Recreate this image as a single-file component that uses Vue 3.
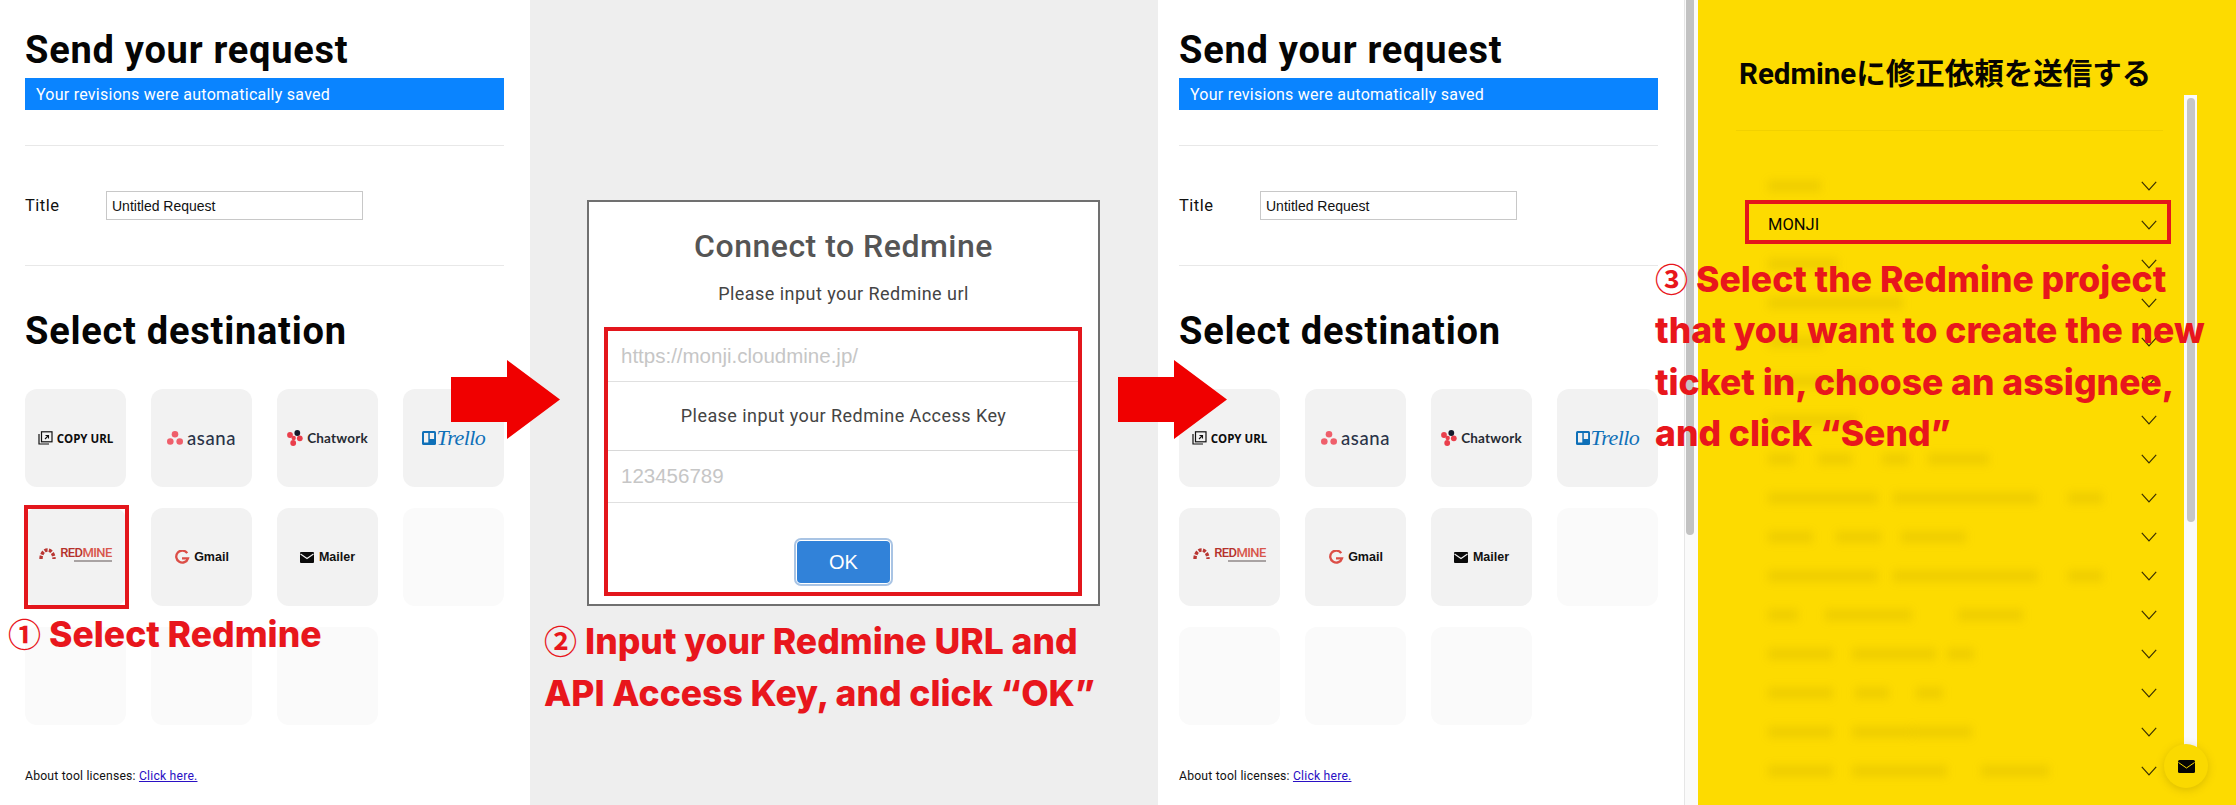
<script setup>
const panels = ['form-a', 'modal', 'form-b', 'yellow']
const tiles = [
  { id: 'copy' }, { id: 'asana' }, { id: 'chatwork' }, { id: 'trello' },
  { id: 'redmine' }, { id: 'gmail' }, { id: 'mailer' }, { id: 'empty' },
  { id: 'empty' }, { id: 'empty' }, { id: 'empty' }
]
const rows = [
  { segs: [[0, 53]] },
  { label: 'MONJI', segs: [] },
  { segs: [[0, 70]] },
  { segs: [[0, 135]] },
  { segs: [[0, 55]] },
  { segs: [[0, 100]] },
  { segs: [[0, 90]] },
  { segs: [[0, 27], [50, 34], [114, 27], [160, 61]] },
  { segs: [[0, 110], [125, 145], [300, 35]] },
  { segs: [[0, 45], [68, 45], [133, 65]] },
  { segs: [[0, 110], [125, 145], [300, 35]] },
  { segs: [[0, 30], [57, 87], [190, 65]] },
  { segs: [[0, 65], [84, 84], [179, 27]] },
  { segs: [[0, 65], [87, 34], [148, 27]] },
  { segs: [[0, 65], [84, 60], [144, 60]] },
  { segs: [[0, 65], [84, 95], [213, 68]] }
]
</script>

<template>
  <div class="shot">
    <template v-for="p in panels" :key="p">
      <section v-if="p.startsWith('form')" class="form" :class="p">
        <div class="form-body">
          <h1 class="h-first">Send your request</h1>
          <div class="saved">Your revisions were automatically saved</div>
          <hr class="rule rule-one" />
          <div class="title-row">
            <span class="title-label">Title</span>
            <input class="title-input" value="Untitled Request" />
          </div>
          <hr class="rule rule-two" />
          <h1 class="h-second">Select destination</h1>
          <div class="tiles">
            <div v-for="(t, i) in tiles" :key="i" class="tile" :class="{ faded: t.id === 'empty' }">
              <div v-if="t.id === 'copy'" class="logo">
                <svg width="15" height="14" viewBox="0 0 15 14" fill="none" stroke="#111" stroke-width="1.2">
                  <path d="M1 3v10h10" /><rect x="3.5" y="0.8" width="10.5" height="10" />
                  <path d="M7 8l3.500-3.500M7.500 4.500h3v3" stroke-width="1.100" />
                </svg>
                <span class="t-copy">COPY URL</span>
              </div>
              <div v-else-if="t.id === 'asana'" class="logo">
                <svg width="16" height="14" viewBox="0 0 16 14" fill="#ef5f6b">
                  <circle cx="8" cy="3.300" r="3.300" /><circle cx="3.300" cy="10.500" r="3.300" /><circle cx="12.700" cy="10.500" r="3.300" />
                </svg>
                <span class="t-asana">asana</span>
              </div>
              <div v-else-if="t.id === 'chatwork'" class="logo">
                <svg width="16" height="16" viewBox="0 0 16 16" fill="#ea3f4c">
                  <circle cx="3" cy="5" r="2.900" /><circle cx="12.800" cy="8.300" r="2.900" /><circle cx="6.700" cy="8" r="2.200" /><circle cx="6.200" cy="13" r="2.900" />
                  <circle cx="10.300" cy="3" r="2.900" fill="#15192b" />
                </svg>
                <span class="t-chat">Chatwork</span>
              </div>
              <div v-else-if="t.id === 'trello'" class="logo logo-trello">
                <svg width="14" height="14" viewBox="0 0 14 14">
                  <rect width="14" height="14" rx="1.500" fill="#0f70b8" />
                  <rect x="2" y="2" width="4.300" height="9.500" fill="#f2f2f2" /><rect x="7.800" y="2" width="4.300" height="6" fill="#f2f2f2" />
                </svg>
                <span class="t-trello">Trello</span>
              </div>
              <div v-else-if="t.id === 'redmine'" class="logo logo-redmine">
                <svg width="17" height="12" viewBox="0 0 17 12" fill="none">
                  <path d="M2 12A6.500 9 0 0 1 15 12" stroke="#b93632" stroke-width="3.400" stroke-dasharray="3.200 1.300" />
                </svg>
                <span class="t-red">RED<em>MINE</em><i class="red-sub"></i></span>
              </div>
              <div v-else-if="t.id === 'gmail'" class="logo">
                <svg width="16" height="15" viewBox="0 0 16 15" fill="none">
                  <path d="M13.200 3.200A6 6 0 1 0 14 8.300H8" stroke="#dc4e47" stroke-width="2.300" />
                </svg>
                <span class="t-mail">Gmail</span>
              </div>
              <div v-else-if="t.id === 'mailer'" class="logo logo-mailer">
                <svg width="14" height="11" viewBox="0 0 14 11">
                  <rect width="14" height="11" rx="1" fill="#0a0a0a" />
                  <path d="M0.500 2L7 6.500L13.500 2" fill="none" stroke="#f2f2f2" stroke-width="1.100" />
                </svg>
                <span class="t-mail">Mailer</span>
              </div>
            </div>
          </div>
          <p class="license">About tool licenses: <a href="#" class="license-link">Click here.</a></p>
        </div>
      </section>

      <section v-else-if="p === 'modal'" class="modal-panel">
        <div class="modal">
          <h2 class="modal-title">Connect to Redmine</h2>
          <p class="modal-label first">Please input your Redmine url</p>
          <div class="modal-fields">
            <div class="field field-url">https://monji.cloudmine.jp/</div>
            <p class="modal-label second">Please input your Redmine Access Key</p>
            <div class="field field-key">123456789</div>
            <div class="ok-wrap"><button class="ok">OK</button></div>
          </div>
        </div>
      </section>

      <section v-else class="yellow-wrap">
        <div class="gutter"><div class="gutter-thumb"></div></div>
        <div class="yellow">
          <h2 class="y-title">Redmineに修正依頼を送信する</h2>
          <hr class="y-rule" />
          <div class="y-list">
            <div v-for="(r, i) in rows" :key="i" class="y-row">
              <span v-if="r.label" class="y-label">{{ r.label }}</span>
              <div v-else class="y-blur">
                <span v-for="(s, j) in r.segs" :key="j" class="y-seg" :style="{ left: s[0] + 'px', width: s[1] + 'px' }"></span>
              </div>
              <svg class="y-chev" width="16" height="10" viewBox="0 0 16 10" fill="none" stroke="#3a3000" stroke-width="1.200">
                <path d="M0.800 0.800L8 8.800L15.200 0.800" />
              </svg>
            </div>
          </div>
          <div class="y-track"><div class="y-thumb"></div></div>
          <div class="y-fab">
            <svg width="17" height="13" viewBox="0 0 17 13">
              <rect width="17" height="13" rx="1.500" fill="#050505" />
              <path d="M0.500 2.500L8.500 8L16.500 2.500" fill="none" stroke="#fad900" stroke-width="1" />
            </svg>
          </div>
        </div>
      </section>
    </template>

    <svg class="arrow arrow-one" width="110" height="80" viewBox="0 0 110 80"><path d="M0 17H56V0L109 39.500L56 79V62H0Z" fill="#f00000" /></svg>
    <svg class="arrow arrow-two" width="110" height="80" viewBox="0 0 110 80"><path d="M0 17H56V0L109 39.500L56 79V62H0Z" fill="#f00000" /></svg>

    <div class="mark mark-tile"></div>
    <div class="mark mark-fields"></div>
    <div class="mark mark-monji"></div>

    <div class="note note-one"><span class="num">①</span>Select Redmine</div>
    <div class="note note-two"><span class="num">②</span>Input your Redmine URL and<br />API Access Key, and click “OK”</div>
    <div class="note note-three"><span class="num">③</span>Select the Redmine project<br />that you want to create the new<br />ticket in, choose an assignee,<br />and click “Send”</div>
  </div>
</template>

<style>
html, body { margin: 0; background: #fff; }
</style>

<style scoped>
.shot {
  position: relative;
  display: flex;
  width: 2236px;
  height: 805px;
  overflow: hidden;
  background: #fff;
  font-family: "Roboto", "Noto Sans CJK JP", sans-serif;
  color: #000;
}
.form { flex: none; box-sizing: border-box; height: 805px; background: #fff; }
.form-a { width: 530px; padding-left: 25px; }
.form-b { width: 526px; padding-left: 21px; }
.form-body { width: 479px; }
h1 { margin: 0; font-size: 38px; font-weight: 700; line-height: 46px; letter-spacing: 0.75px; color: #050505; }
.h-first { padding-top: 27px; height: 51px; }
.saved {
  height: 32px; line-height: 33px; background: #0a84ff; color: #fff;
  padding-left: 11px; font-size: 16px; letter-spacing: 0.25px;
}
.rule { border: 0; height: 1px; background: #e8e8e8; margin: 0; }
.rule-one { margin-top: 35px; }
.title-row { display: flex; align-items: center; margin-top: 45px; height: 29px; }
.title-label { width: 81px; font-size: 16.500px; letter-spacing: 0.5px; color: #111; }
.title-input {
  box-sizing: border-box; width: 257px; height: 29px; padding: 0 5px; margin: 0;
  border: 1px solid #c8c8c8; outline: 0; background: #fff; color: #111;
  font-family: "Liberation Sans", Arial, sans-serif; font-size: 14px;
}
.rule-two { margin-top: 45px; }
.h-second { margin-top: 42px; height: 48px; }
.tiles { display: grid; grid-template-columns: repeat(4, 101px); column-gap: 25px; row-gap: 21px; margin-top: 33px; }
.tile { height: 98px; border-radius: 12px; background: #f2f2f2; display: flex; align-items: center; justify-content: center; }
.tile.faded { background: #fafafa; }
.logo { display: flex; align-items: center; gap: 4px; }
.t-copy { font-family: "Open Sans", sans-serif; font-weight: 700; font-size: 11.500px; color: #0d0d0d; }
.t-asana { font-family: "Lato", sans-serif; font-weight: 500; font-size: 18.500px; line-height: 20px; color: #2a3348; letter-spacing: 0.6px; }
.t-chat { font-family: "Lato", sans-serif; font-weight: 700; font-size: 13.500px; color: #262b33; letter-spacing: 0.2px; }
.logo-trello { gap: 1px; }
.t-trello { font-family: "Liberation Serif", serif; font-style: italic; font-size: 22px; line-height: 22px; color: #0f70b8; letter-spacing: -0.5px; }
.logo-redmine { gap: 4px; margin-top: -8px; }
.t-red { position: relative; font-family: "Roboto", sans-serif; font-weight: 500; font-size: 13px; line-height: 14px; letter-spacing: -0.6px; color: #b5312c; }
.t-red em { font-style: normal; color: #d8574c; }
.red-sub { position: absolute; right: 0; top: 14px; width: 38px; height: 2px; background: #a9a3a3; }
.t-mail { font-family: "Liberation Sans", sans-serif; font-weight: 700; font-size: 12.500px; color: #111; }
.logo-mailer { gap: 5px; }
.license { margin: 42px 0 0; font-size: 12.200px; line-height: 18px; letter-spacing: 0.2px; color: #111; }
.license-link { color: #2a10c4; text-decoration: underline; }

.modal-panel { flex: none; width: 628px; height: 805px; background: #eeeeee; display: flex; justify-content: center; padding-top: 200px; box-sizing: border-box; }
.modal {
  box-sizing: border-box; width: 513px; height: 406px; margin-left: 57px; margin-right: 58px; flex: none;
  background: #fff; border: 2px solid #707070; text-align: center;
  padding: 0 15px;
}
.modal-title { margin: 26px 0 0; font-size: 32px; font-weight: 500; line-height: 36px; color: #555; letter-spacing: 0.5px; }
.modal-label { margin: 0; font-size: 18px; color: #444; line-height: 24px; letter-spacing: 0.45px; }
.modal-label.first { margin-top: 18px; }
.modal-fields { margin-top: 21px; padding: 4px; }
.field {
  text-align: left; color: #c6c6c6; font-family: "Liberation Sans", sans-serif; font-size: 20.500px;
  border-bottom: 1px solid #e0e0e0; padding-left: 13px; box-sizing: border-box;
}
.field-url { height: 51px; line-height: 50px; }
.modal-label.second { height: 69px; line-height: 68px; border-bottom: 1px solid #d8d8d8; box-sizing: border-box; }
.field-key { height: 52px; line-height: 50px; }
.ok-wrap { display: flex; justify-content: center; padding-top: 38px; }
.ok {
  box-sizing: content-box; width: 93px; height: 42px; padding: 0; border: 0; border-radius: 4px;
  background: #3182d9; color: #fff; font-family: "Liberation Sans", sans-serif; font-size: 20px;
  box-shadow: 0 0 0 1px #fff, 0 0 0 3px #a9c4e4;
}

.yellow-wrap { flex: none; display: flex; width: 552px; height: 805px; }
.gutter { flex: none; box-sizing: border-box; width: 14px; height: 805px; padding-left: 2px; background: #fafafa; border-left: 1px solid #e6e6e6; }
.gutter-thumb { width: 8px; height: 535px; margin-left: -1px; background: #c2c2c2; border-radius: 0 0 4px 4px; }
.yellow { position: relative; flex: 1; height: 805px; background: #fddb00; padding-left: 41px; box-sizing: border-box; overflow: hidden; }
.y-title { margin: 53px 0 0; font-size: 29.500px; font-weight: 700; line-height: 42px; color: #070500; letter-spacing: 0; }
.y-rule { border: 0; height: 1px; background: #f2d100; margin: 35px 0 0 -3px; width: 427px; }
.y-list { margin-top: 35px; width: 425px; }
.y-row { position: relative; height: 39px; display: flex; align-items: center; padding-left: 29px; }
.y-label { font-size: 16.500px; color: #0a0800; }
.y-blur { position: relative; height: 14px; flex: 1; }
.y-seg { position: absolute; top: 1px; height: 12px; background: rgba(150, 125, 0, 0.13); filter: blur(4px); }
.y-chev { position: absolute; left: 402px; top: 15px; }
.y-track { position: absolute; left: 486px; top: 95px; width: 13px; height: 680px; background: #fafafa; }
.y-thumb { width: 8px; height: 424px; margin: 3px 0 0 3px; border-radius: 4px; background: #c6c6c6; }
.y-fab {
  position: absolute; left: 466px; top: 744px; width: 44px; height: 44px; border-radius: 50%;
  background: #fad900; box-shadow: 0 2px 8px rgba(120, 100, 0, 0.25);
  display: flex; align-items: center; justify-content: center;
}

.arrow { position: absolute; top: 360px; }
.arrow-one { left: 451px; }
.arrow-two { left: 1118px; }
.mark { position: absolute; box-sizing: border-box; border: 4px solid #e3161c; }
.mark-tile { left: 24px; top: 505px; width: 105px; height: 104px; }
.mark-fields { left: 604px; top: 327px; width: 478px; height: 269px; }
.mark-monji { left: 1745px; top: 200px; width: 426px; height: 44px; }
.note { position: absolute; font-family: "Inter", sans-serif; font-weight: 800; font-size: 35.500px; color: #e8161c; white-space: nowrap; }
.num { display: inline-block; width: 41px; font-family: "Noto Sans CJK JP", sans-serif; font-weight: 700; font-size: 33px; }
.note-one { left: 8px; top: 608px; line-height: 50px; }
.note-two { left: 544px; top: 614px; line-height: 52px; }
.note-three { left: 1655px; top: 253px; line-height: 51.300px; }
</style>
